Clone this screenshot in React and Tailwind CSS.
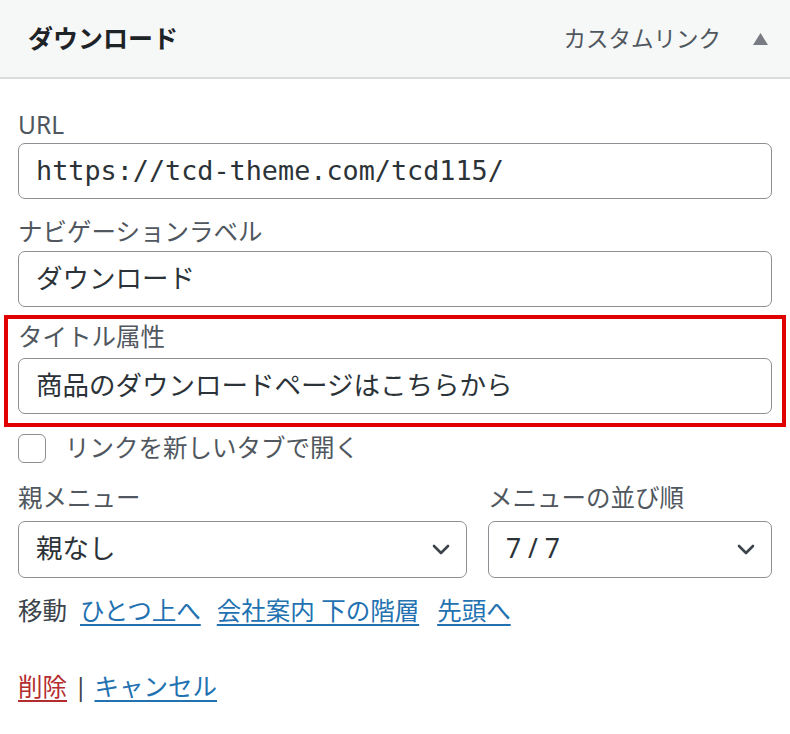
import React from 'react';

const jp = "font-['Noto_Sans','Noto_Sans_CJK_JP',sans-serif]";

const Chevron = () => (
  <svg width="18" height="11" viewBox="0 0 18 11" fill="none">
    <path d="M2 2l7 7 7-7" stroke="#3c434a" strokeWidth="2.6" strokeLinecap="round" strokeLinejoin="round" />
  </svg>
);

const Field = ({ children, mono }) => (
  <div
    className={`h-[56px] w-full border-[1.5px] border-[#8c8f94] rounded-[7px] bg-white flex items-center px-[17px] text-[#2c3338] ${
      mono ? "font-['DejaVu_Sans_Mono',monospace] text-[26.8px]" : 'text-[26.5px]'
    }`}
  >
    {children}
  </div>
);

const Label = ({ children }) => (
  <div className="text-[24.5px] leading-[30px] text-[#50575e]">{children}</div>
);

export default function App() {
  return (
    <div className={`w-[790px] h-[734px] bg-white ${jp}`}>
      <div className="h-[79px] bg-[#f6f7f7] border-b-2 border-[#dcdcde] flex items-center justify-between pl-[28px] pr-[22px]">
        <div className="text-[25px] font-bold text-[#1d2327]">ダウンロード</div>
        <div className="flex items-center gap-[32px]">
          <span className="text-[22.5px] text-[#50575e]">カスタムリンク</span>
          <svg width="15" height="12" viewBox="0 0 15 12">
            <path d="M7.5 0L15 12H0z" fill="#787c82" />
          </svg>
        </div>
      </div>

      <div className="px-[18px] pt-[31px]">
        <Label>URL</Label>
        <div className="mt-[3px]">
          <Field mono>https://tcd-theme.com/tcd115/</Field>
        </div>

        <div className="mt-[18px]">
          <Label>ナビゲーションラベル</Label>
        </div>
        <div className="mt-[4px]">
          <Field>ダウンロード</Field>
        </div>

        <div className="mt-[8px] -mx-[14px] border-4 border-[#e00000] px-[10px] pt-[3px] pb-[9px]">
          <Label>タイトル属性</Label>
          <div className="mt-[6px]">
            <Field>商品のダウンロードページはこちらから</Field>
          </div>
        </div>

        <div className="mt-[3px] flex items-center gap-[19px]">
          <div className="w-[28px] h-[29px] border-[1.5px] border-[#8c8f94] rounded-[6px] bg-white" />
          <span className="text-[24.5px] text-[#50575e]">リンクを新しいタブで開く</span>
        </div>

        <div className="mt-[16px] flex gap-[21px]">
          <div className="w-[449px]">
            <Label>親メニュー</Label>
            <div className="mt-[8px] h-[57px] border-[1.5px] border-[#8c8f94] rounded-[7px] flex items-center justify-between pl-[17px] pr-[16px] text-[26.5px] text-[#2c3338]">
              <span>親なし</span>
              <Chevron />
            </div>
          </div>
          <div className="flex-1">
            <Label>メニューの並び順</Label>
            <div className="mt-[8px] h-[57px] border-[1.5px] border-[#8c8f94] rounded-[7px] flex items-center justify-between pl-[17px] pr-[16px] text-[26.5px] text-[#2c3338]">
              <span>7 / 7</span>
              <Chevron />
            </div>
          </div>
        </div>

        <div className="mt-[17px] flex items-center text-[24.5px] leading-[32px]">
          <span className="text-[#3c434a] mr-[13px]">移動</span>
          <a className="text-[#2271b1] underline underline-offset-4 mr-[16px]">ひとつ上へ</a>
          <a className="text-[#2271b1] underline underline-offset-4 mr-[18px]">会社案内 下の階層</a>
          <a className="text-[#2271b1] underline underline-offset-4">先頭へ</a>
        </div>

        <div className="mt-[44px] flex items-center text-[24.5px] leading-[32px] text-[#3c434a]">
          <a className="text-[#b32d2e] underline underline-offset-4">削除</a>
          <span className="mx-[7px]">|</span>
          <a className="text-[#2271b1] underline underline-offset-4">キャンセル</a>
        </div>
      </div>
    </div>
  );
}
